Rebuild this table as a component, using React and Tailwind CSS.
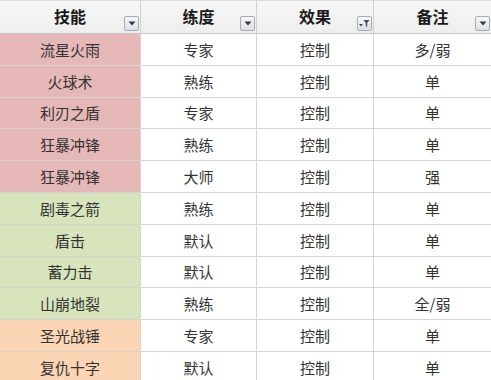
const rows = [
  { name: "流星火雨", level: "专家", effect: "控制", note: "多/弱", bg: "bg-[#e6b8b7]" },
  { name: "火球术", level: "熟练", effect: "控制", note: "单", bg: "bg-[#e6b8b7]" },
  { name: "利刃之盾", level: "专家", effect: "控制", note: "单", bg: "bg-[#e6b8b7]" },
  { name: "狂暴冲锋", level: "熟练", effect: "控制", note: "单", bg: "bg-[#e6b8b7]" },
  { name: "狂暴冲锋", level: "大师", effect: "控制", note: "强", bg: "bg-[#e6b8b7]" },
  { name: "剧毒之箭", level: "熟练", effect: "控制", note: "单", bg: "bg-[#d8e4bc]" },
  { name: "盾击", level: "默认", effect: "控制", note: "单", bg: "bg-[#d8e4bc]" },
  { name: "蓄力击", level: "默认", effect: "控制", note: "单", bg: "bg-[#d8e4bc]" },
  { name: "山崩地裂", level: "熟练", effect: "控制", note: "全/弱", bg: "bg-[#d8e4bc]" },
  { name: "圣光战锤", level: "专家", effect: "控制", note: "单", bg: "bg-[#fcd5b4]" },
  { name: "复仇十字", level: "默认", effect: "控制", note: "单", bg: "bg-[#fcd5b4]" },
];

const cols = "grid grid-cols-[141px_116px_117px_117px]";

function FilterButton({ filtered }) {
  return (
    <div className="absolute right-[1px] bottom-[2px] w-[15px] h-[15px] rounded-[2px] border border-[#a9abb2] bg-gradient-to-b from-[#f7f8fa] to-[#dcdfe5] flex items-center justify-center">
      {filtered ? (
        <svg width="11" height="9" viewBox="0 0 11 9">
          <path d="M0 5 L4 5 L2 7.5 Z" fill="#3c4a63" />
          <path d="M4.5 1 L10.5 1 L8.2 4 L8.2 8 L6.8 7 L6.8 4 Z" fill="#3c4a63" />
        </svg>
      ) : (
        <svg width="8" height="5" viewBox="0 0 8 5">
          <path d="M0.5 0.5 L7.5 0.5 L4 4.5 Z" fill="#2e3a52" />
        </svg>
      )}
    </div>
  );
}

function HeaderCell({ label, filtered, last }) {
  return (
    <div className={`relative h-[32px] flex items-center justify-center pb-[2px] ${last ? "" : "border-r border-[#d0d0d0]"}`}>
      <span className="text-[16px] font-bold text-[#1a1a1a]">{label}</span>
      <FilterButton filtered={filtered} />
    </div>
  );
}

export default function App() {
  return (
    <div
      className="w-[491px] h-[380px] overflow-hidden bg-white text-[#333]"
      style={{ fontFamily: '"Noto Sans CJK SC", "Liberation Sans", sans-serif' }}
    >
      <div className={`${cols} border-t border-[#dcdcdc] border-b border-b-[#c8c8c8] bg-gradient-to-b from-[#f7f7f7] to-[#eeeeee]`}>
        <HeaderCell label="技能" />
        <HeaderCell label="练度" />
        <HeaderCell label="效果" filtered />
        <HeaderCell label="备注" last />
      </div>
      {rows.map((r, i) => (
        <div key={i} className={`${cols} h-[31.8px] border-b border-[#d4d4d4] text-[15px] leading-none`}>
          <div className={`${r.bg} flex items-center justify-center border-r border-[#d4d4d4]`}>{r.name}</div>
          <div className="flex items-center justify-center border-r border-[#d4d4d4]">{r.level}</div>
          <div className="flex items-center justify-center border-r border-[#d4d4d4]">{r.effect}</div>
          <div className="flex items-center justify-center">{r.note}</div>
        </div>
      ))}
    </div>
  );
}
